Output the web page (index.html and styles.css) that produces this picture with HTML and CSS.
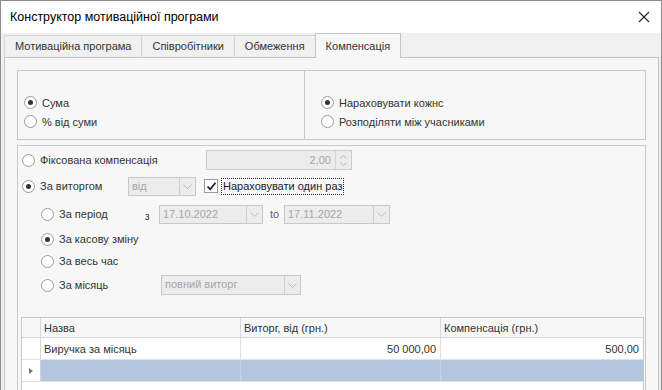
FILE: index.html
```html
<!DOCTYPE html>
<html lang="uk">
<head>
    <meta charset="UTF-8">
    <meta name="viewport" content="width=device-width, initial-scale=1.0">
    <title>Конструктор мотиваційної програми</title>
    <link rel="stylesheet" href="styles.css">
</head>
<body>
    <div class="window">
        <div class="titlebar">
            <span class="title">Конструктор мотиваційної програми</span>
            <svg class="close" width="12" height="12" viewBox="0 0 12 12">
                <path d="M1 1 L11 11 M11 1 L1 11" stroke="#222" stroke-width="1.1" fill="none"/>
            </svg>
        </div>

        <div class="tabs">
            <div class="tab">Мотиваційна програма</div>
            <div class="tab">Співробітники</div>
            <div class="tab">Обмеження</div>
            <div class="tab active">Компенсація</div>
        </div>

        <div class="panel">
            <div class="groups">
                <div class="group group-left">
                    <label class="radio-row"><span class="radio checked"></span>Сума</label>
                    <label class="radio-row"><span class="radio"></span>% від суми</label>
                </div>
                <div class="group group-right">
                    <label class="radio-row"><span class="radio checked"></span>Нараховувати кожнс</label>
                    <label class="radio-row"><span class="radio"></span>Розподіляти між учасниками</label>
                </div>
            </div>

            <div class="group group-main">
                <div class="row row-fixed">
                    <label class="radio-row lbl-fixed"><span class="radio"></span>Фіксована компенсація</label>
                    <div class="spin">
                        <span class="spin-value">2,00</span>
                        <span class="spin-btns">
                            <svg width="7" height="4" viewBox="0 0 7 4"><path d="M0.5 3.5 L3.5 0.5 L6.5 3.5" stroke="#b8b8b8" fill="none"/></svg>
                            <svg width="7" height="4" viewBox="0 0 7 4"><path d="M0.5 0.5 L3.5 3.5 L6.5 0.5" stroke="#b8b8b8" fill="none"/></svg>
                        </span>
                    </div>
                </div>

                <div class="row row-revenue">
                    <label class="radio-row lbl-revenue"><span class="radio checked"></span>За виторгом</label>
                    <div class="combo combo-from">
                        <span class="combo-text">від</span>
                        <span class="combo-btn"><svg width="9" height="5" viewBox="0 0 9 5"><path d="M0.5 0.5 L4.5 4.5 L8.5 0.5" stroke="#bdbdbd" fill="none"/></svg></span>
                    </div>
                    <span class="checkbox">
                        <svg width="11" height="11" viewBox="0 0 11 11"><path d="M1.5 5.5 L4.2 8.3 L9.5 1.8" stroke="#222" stroke-width="1.8" fill="none"/></svg>
                    </span>
                    <span class="focus-label">Нараховувати один раз</span>
                </div>

                <div class="row row-period sub">
                    <label class="radio-row lbl-period"><span class="radio"></span>За період</label>
                    <span class="small">з</span>
                    <div class="combo combo-date">
                        <span class="combo-text">17.10.2022</span>
                        <span class="combo-btn"><svg width="9" height="5" viewBox="0 0 9 5"><path d="M0.5 0.5 L4.5 4.5 L8.5 0.5" stroke="#bdbdbd" fill="none"/></svg></span>
                    </div>
                    <span class="to">to</span>
                    <div class="combo combo-date2">
                        <span class="combo-text">17.11.2022</span>
                        <span class="combo-btn"><svg width="9" height="5" viewBox="0 0 9 5"><path d="M0.5 0.5 L4.5 4.5 L8.5 0.5" stroke="#bdbdbd" fill="none"/></svg></span>
                    </div>
                </div>

                <div class="row row-shift sub">
                    <label class="radio-row"><span class="radio checked"></span>За касову зміну</label>
                </div>

                <div class="row row-all sub">
                    <label class="radio-row"><span class="radio"></span>За весь час</label>
                </div>

                <div class="row row-month sub">
                    <label class="radio-row lbl-month"><span class="radio"></span>За місяць</label>
                    <div class="combo combo-month">
                        <span class="combo-text">повний виторг</span>
                        <span class="combo-btn"><svg width="9" height="5" viewBox="0 0 9 5"><path d="M0.5 0.5 L4.5 4.5 L8.5 0.5" stroke="#bdbdbd" fill="none"/></svg></span>
                    </div>
                </div>

                <div class="grid">
                    <div class="grid-row grid-head">
                        <div class="cell ind"></div>
                        <div class="cell c1">Назва</div>
                        <div class="cell c2">Виторг, від (грн.)</div>
                        <div class="cell c3">Компенсація (грн.)</div>
                    </div>
                    <div class="grid-row">
                        <div class="cell ind"></div>
                        <div class="cell c1">Виручка за місяць</div>
                        <div class="cell c2 num">50 000,00</div>
                        <div class="cell c3 num">500,00</div>
                    </div>
                    <div class="grid-row selected">
                        <div class="cell ind"><span class="arrow"></span></div>
                        <div class="cell c1"></div>
                        <div class="cell c2"></div>
                        <div class="cell c3"></div>
                    </div>
                </div>
            </div>
        </div>
    </div>
</body>
</html>
```

FILE: styles.css
```css
body {
    margin: 0;
    font-family: 'Liberation Sans', Arial, sans-serif;
    font-size: 11px;
    color: #333;
    background: #fff;
}
.window {
    width: 662px;
    height: 390px;
    box-sizing: border-box;
    border: 1px solid #8c8c8c;
    border-bottom: none;
    background: #f0f0f0;
    overflow: hidden;
}
.titlebar {
    height: 32px;
    background: #fff;
    display: flex;
    align-items: center;
    justify-content: space-between;
    padding: 0 11px 0 9px;
}
.title {
    font-size: 12.5px;
    color: #000;
}
.tabs {
    display: flex;
    padding-left: 3px;
    height: 24px;
    align-items: flex-end;
}
.tab {
    height: 21px;
    line-height: 21px;
    padding: 0 10px;
    border: 1px solid #d4d4d4;
    border-bottom: none;
    margin-right: -1px;
    background: #f0f0f0;
    color: #333;
    font-size: 11px;
}
.tab.active {
    height: 24px;
    line-height: 25px;
    background: #f7f7f7;
    border-color: #c4c4c4;
    margin-bottom: -1px;
    position: relative;
    z-index: 1;
}
.panel {
    margin: 0 2px 0 3px;
    border: 1px solid #c4c4c4;
    background: #f7f7f7;
    padding: 12px 12px 0 12px;
    height: 340px;
}
.groups {
    display: flex;
    height: 70px;
}
.group {
    border: 1px solid #c8c8c8;
    box-sizing: border-box;
}
.group-left {
    width: 288px;
    padding: 22px 0 0 6px;
}
.group-right {
    flex: 1;
    border-left: none;
    padding: 22px 0 0 16px;
}
.radio-row {
    display: flex;
    align-items: center;
    height: 19px;
    white-space: nowrap;
}
.radio {
    width: 11px;
    height: 11px;
    border: 1px solid #9a9a9a;
    border-radius: 50%;
    background: #fff;
    margin-right: 5px;
    flex: none;
    position: relative;
}
.radio.checked::after {
    content: "";
    position: absolute;
    left: 3px;
    top: 3px;
    width: 5px;
    height: 5px;
    border-radius: 50%;
    background: #333;
}
.group-main {
    margin-top: 5px;
    height: 260px;
    padding: 3px 3px 0 4px;
}
.row {
    display: flex;
    align-items: center;
}
.row.sub {
    padding-left: 19px;
}
.row-fixed { height: 22px; }
.row-revenue { height: 30px; }
.row-period { height: 26px; }
.row-shift { height: 24px; }
.row-all { height: 20px; }
.row-month { height: 28px; }
.lbl-fixed { width: 184px; }
.lbl-revenue { width: 106px; }
.lbl-period { width: 104px; }
.lbl-month { width: 120px; }
.spin {
    width: 146px;
    height: 20px;
    box-sizing: border-box;
    border: 1px solid #cbcbcb;
    background: #ececec;
    display: flex;
    color: #a6a6a6;
}
.spin-value {
    flex: 1;
    text-align: right;
    padding-right: 4px;
    line-height: 18px;
}
.spin-btns {
    width: 15px;
    border-left: 1px solid #d2d2d2;
    display: flex;
    flex-direction: column;
    align-items: center;
    justify-content: center;
    gap: 3px;
}
.combo {
    height: 19px;
    box-sizing: border-box;
    border: 1px solid #c8c8c8;
    background: #ececec;
    display: flex;
    color: #a6a6a6;
}
.combo-text {
    flex: 1;
    padding-left: 3px;
    line-height: 17px;
}
.combo-btn {
    width: 15px;
    border-left: 1px solid #cfcfcf;
    display: flex;
    align-items: center;
    justify-content: center;
}
.combo-from { width: 68px; }
.combo-date { width: 104px; }
.combo-date2 { width: 106px; }
.combo-month { width: 140px; height: 20px; }
.checkbox {
    width: 12px;
    height: 12px;
    border: 1px solid #9a9a9a;
    background: #fff;
    margin-left: 8px;
    margin-right: 3px;
    display: flex;
    align-items: center;
    justify-content: center;
}
.focus-label {
    border: 1px dotted #333;
    padding: 0 1px;
    line-height: 15px;
    color: #222;
}
.small {
    width: 14px;
    font-size: 10px;
    padding-top: 5px;
}
.to {
    width: 14px;
    margin-left: 7px;
    color: #666;
}
.grid {
    margin: 18px 0 0 -1px;
    width: 621px;
    border: 1px solid #c8c8c8;
    border-bottom: none;
    background: #fff;
    height: 80px;
}
.grid-row {
    display: flex;
    height: 21px;
    border-bottom: 1px solid #e2e2e2;
}
.grid-head {
    height: 19px;
    background: #f7f7f7;
    border-bottom-color: #d8d8d8;
}
.cell {
    box-sizing: border-box;
    border-right: 1px solid #e0e0e0;
    padding: 0 4px 0 3px;
    display: flex;
    align-items: center;
    white-space: nowrap;
}
.grid-head .cell {
    border-right-color: #d8d8d8;
}
.ind {
    width: 19px;
    background: #fff;
    border-right-color: #d8d8d8;
    justify-content: center;
}
.grid-head .ind {
    background: #f7f7f7;
}
.c1, .c2 { width: 200px; }
.c3 { flex: 1; border-right: none; }
.num { justify-content: flex-end; }
.selected .cell { background: #b2c6de; border-right-color: #c4d3e6; }
.selected .ind { background: #fff; }
.arrow {
    width: 0;
    height: 0;
    border-top: 3px solid transparent;
    border-bottom: 3px solid transparent;
    border-left: 4px solid #777;
}
```
